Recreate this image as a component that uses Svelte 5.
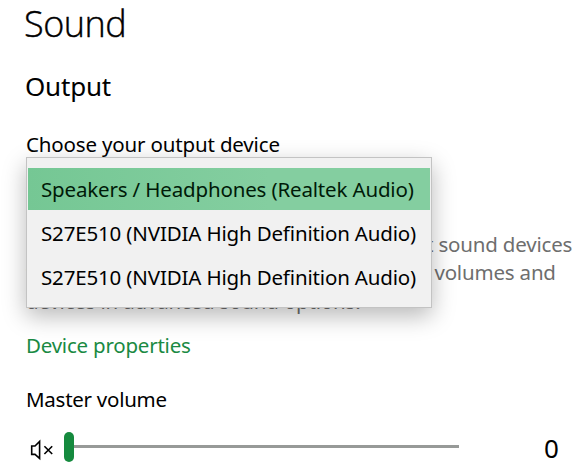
<script lang="ts">
    const devices = [
        { id: 0, name: "Speakers / Headphones (Realtek Audio)" },
        { id: 1, name: "S27E510 (NVIDIA High Definition Audio)" },
        { id: 2, name: "S27E510 (NVIDIA High Definition Audio)" },
    ];

    let selected = $state(0);
    let volume = $state(0);
</script>

<main class="settings">
    <h1>Sound</h1>
    <h2>Output</h2>

    <div class="field">
        <p class="label">Choose your output device</p>
        <ul class="dropdown" role="listbox">
            {#each devices as device (device.id)}
                <li role="option" aria-selected={selected === device.id}>
                    <button
                        class="option"
                        class:first={device.id === 0}
                        class:selected={selected === device.id}
                        onclick={() => (selected = device.id)}
                    >
                        {device.name}
                    </button>
                </li>
            {/each}
        </ul>
    </div>

    <p class="hint">
        <span>Certain apps may be set up to use different sound devices</span>
        <span>than the one selected here. Customize app volumes and</span>
        <span>devices in advanced sound options.</span>
    </p>

    <a class="link" href="#properties">Device properties</a>

    <p class="label master">Master volume</p>
    <div class="volume">
        <svg class="mute" width="24" height="22" viewBox="0 0 24 22" fill="none" stroke="#000">
            <path d="M1.7 7H5L9.6 2.4V19.4L5 15.4H1.7Z" stroke-width="1.6" />
            <path d="M14.4 7.2L22.2 15M22.2 7.2L14.4 15" stroke-width="1.6" />
        </svg>
        <div class="slider">
            <div class="thumb" style="left: {volume}%"></div>
        </div>
        <span class="value">{volume}</span>
    </div>
</main>

<style>
    :global(body) {
        margin: 0;
        background: #fff;
        overflow: hidden;
    }

    .settings {
        box-sizing: border-box;
        width: 583px;
        height: 468px;
        padding: 2px 0 0 26px;
        overflow: hidden;
        font-family: "Noto Sans", "Open Sans", sans-serif;
        font-size: 20.5px;
        line-height: 28px;
        letter-spacing: -0.16px;
        color: #000;
        white-space: nowrap;
    }

    h1,
    h2,
    p,
    ul {
        margin: 0;
        padding: 0;
        font-weight: 400;
    }

    h1 {
        margin-left: -2px;
        font-family: "Open Sans", "Noto Sans", sans-serif;
        font-size: 36px;
        font-weight: 300;
        line-height: 44px;
        letter-spacing: -0.5px;
        -webkit-text-stroke: 0.4px #000;
    }

    h2 {
        margin: 22px 0 0 -1px;
        font-size: 26px;
        line-height: 36px;
        letter-spacing: -0.2px;
    }

    .field {
        position: relative;
        margin-top: 26px;
    }

    .dropdown {
        position: absolute;
        top: 27px;
        left: 0;
        box-sizing: border-box;
        width: 406px;
        height: 151px;
        padding: 10px 1px;
        background: #f1f1f1;
        border: 1px solid #c3c3c3;
        box-shadow: 0 8px 22px rgba(0, 0, 0, 0.28);
        list-style: none;
    }

    .option {
        display: block;
        width: 100%;
        height: 44px;
        padding: 0 0 0 13px;
        border: 0;
        background: none;
        font: inherit;
        letter-spacing: inherit;
        color: #000;
        text-align: left;
    }

    .option.first {
        height: 42px;
        margin-bottom: 1px;
    }

    .option.selected {
        background: linear-gradient(90deg, #75c794, #84cea0 60%);
        color: #001a08;
    }

    .hint {
        margin-top: 72px;
        letter-spacing: -0.19px;
        color: #6e6e6e;
    }

    .hint span {
        display: block;
    }

    .hint span:last-child {
        padding-top: 1px;
    }

    .link {
        display: block;
        width: max-content;
        margin-top: 16px;
        letter-spacing: -0.22px;
        color: #1a8a43;
        text-decoration: none;
    }

    .master {
        margin-top: 26px;
        letter-spacing: -0.26px;
    }

    .volume {
        display: flex;
        align-items: center;
        height: 36px;
        margin-top: 17px;
    }

    .mute {
        margin: 3px 10px 0 4px;
    }

    .slider {
        position: relative;
        width: 395px;
        height: 3px;
        margin-top: -4px;
        background: #979a98;
    }

    .thumb {
        position: absolute;
        top: -13px;
        width: 10px;
        height: 30px;
        border-radius: 5px;
        background: #158a3e;
    }

    .value {
        margin-left: 85px;
        font-size: 26px;
    }
</style>
